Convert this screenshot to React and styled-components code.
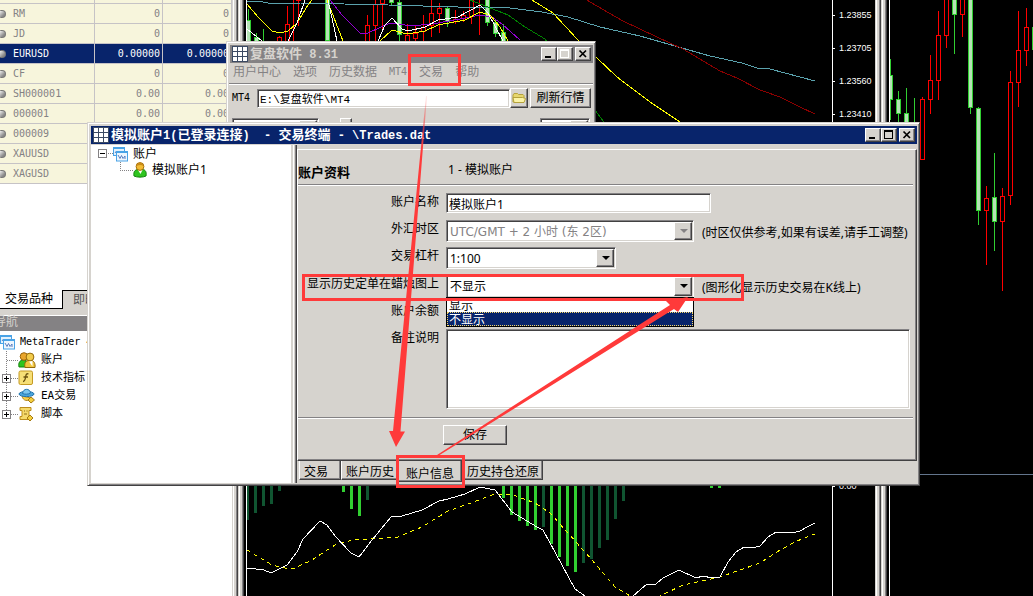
import React from "react";
import styled, { createGlobalStyle, css } from "styled-components";

const face = "#d6d3ce";
const shade = "#848284";
const dark = "#424142";
const navy = "#08246b";
const markRed = "#ff3a3a";

const GlobalStyle = createGlobalStyle`
  * { box-sizing: border-box; }
  body {
    margin: 0;
    background: #fff;
    color: #000;
    font: 12px/16px "Noto Sans", "Noto Sans CJK SC", sans-serif;
  }
  button, input, select, textarea { font: inherit; color: inherit; margin: 0; border-radius: 0; }
`;

const raised = css`
  background: ${face};
  border: 1px solid;
  border-color: #fff ${dark} ${dark} #fff;
  box-shadow: inset -1px -1px ${shade};
`;
const sunken = css`
  background: #fff;
  border: 1px solid;
  border-color: ${shade} #fff #fff ${shade};
  box-shadow: inset 1px 1px ${dark}, inset -1px -1px ${face};
`;

/* ---------- desktop ---------- */
const Desktop = styled.div`
  position: relative;
  display: flex;
  height: 100vh;
  min-height: 596px;
  overflow: hidden;
  background: #fff;
`;
const SideBar = styled.aside`
  flex: 0 0 232px;
  overflow: hidden;
  display: flex;
  flex-direction: column;
`;
const Splitter = styled.div`
  flex: 0 0 15px;
  background: linear-gradient(
    to right,
    ${face} 0 1px, #fff 1px 2px, ${face} 2px 4px, ${shade} 4px 5px, ${dark} 5px 6px,
    ${face} 6px 7px, #fff 7px 8px, ${face} 8px 10px, ${shade} 10px 11px, ${dark} 11px 12px,
    #000 12px 14px, #fff 14px 15px
  );
`;
const ChartPane = styled.section`
  flex: ${(p) => p.$grow} 1 ${(p) => p.$basis};
  min-width: 0;
  overflow: hidden;
  display: flex;
  background: #000;
`;
const Plot = styled.svg`
  flex: 1 1 0;
  min-width: 0;
  height: 596px;
  display: block;
`;
const PriceAxis = styled.div`
  flex: 0 0 43px;
  border-left: 1px solid #fff;
  color: #fff;
  font: 9px/10px "Liberation Sans", sans-serif;
  padding-top: 10px;
  display: flex;
  flex-direction: column;
  gap: 23px;
`;
const Tick = styled.span`
  display: flex;
  align-items: center;
  gap: 4px;
  &::before { content: ""; width: 2px; height: 1px; background: #fff; }
`;
const ZeroTick = styled(Tick)`margin-top: 339px;`;

/* ---------- market watch ---------- */
const QuoteTable = styled.table`
  flex: none;
  width: 100%;
  margin-top: -16px;
  table-layout: fixed;
  border-collapse: separate;
  border-spacing: 0;
  color: ${shade};
  font: 10px/18px "DejaVu Sans Mono", monospace;
`;
const QuoteRow = styled.tr`
  background: ${(p) => (p.$selected ? navy : "#f7f5dc")};
  color: ${(p) => (p.$selected ? "#fff" : "inherit")};
`;
const QuoteCell = styled.td`
  height: 20px;
  padding: 0 2px 0 0;
  text-align: right;
  border-right: 1px solid #c6c3c6;
  border-bottom: 1px solid #c6c3c6;
`;
const SymbolHead = styled.th`
  height: 20px;
  padding: 0;
  text-align: left;
  font-weight: normal;
  border-right: 1px solid #c6c3c6;
  border-bottom: 1px solid #c6c3c6;
`;
const SymbolInner = styled.span`
  display: flex;
  align-items: center;
  gap: 7px;
`;
const Dot = styled.i`
  width: 6px;
  height: 8px;
  border-radius: 1px 4px 4px 1px;
  background: linear-gradient(135deg, #eee, #8a8a8a 70%);
  border: 1px solid #777;
  border-left: 0;
`;
const SideTabs = styled.div`
  flex: none;
  display: flex;
  margin-top: 106px;
  height: 19px;
`;
const SideTab = styled.button`
  flex: ${(p) => (p.$active ? "0 0 63px" : "1 1 0")};
  height: 19px;
  padding: 0 0 0 ${(p) => (p.$active ? 5 : 10)}px;
  text-align: left;
  line-height: 16px;
  color: ${(p) => (p.$active ? "#000" : "#555")};
  background: ${(p) => (p.$active ? "#fff" : face)};
  border: 0 solid #000;
  border-width: ${(p) => (p.$active ? "0 1px 1px 0" : "1px 0 0 0")};
`;
const NavHeader = styled.h2`
  flex: none;
  margin: 0;
  height: 22px;
  border-top: 6px solid ${face};
  border-bottom: 2px solid ${shade};
  box-shadow: inset 0 1px #fff;
  background: ${shade};
  color: ${face};
  font-size: 12px;
  font-weight: normal;
  line-height: 14px;
  text-indent: -6px;
`;
const NavTree = styled.ul`
  list-style: none;
  margin: 0;
  padding: 2px 0 0;
  font: 11px/18px "DejaVu Sans Mono", "Noto Sans CJK SC", monospace;
`;
const NavItem = styled.li`
  display: flex;
  align-items: center;
  gap: 5px;
  height: 18px;
  white-space: nowrap;
  font-size: ${(p) => (p.$root ? 10 : 11)}px;
`;
const IconBox = styled.span`
  width: 18px;
  height: 17px;
  margin-left: -5px;
  display: flex;
`;

/* ---------- windows ---------- */
const Window = styled.section`
  position: absolute;
  left: ${(p) => p.$x}px;
  top: ${(p) => p.$y}px;
  width: ${(p) => p.$w}px;
  padding: 2px;
  display: flex;
  flex-direction: column;
  background: ${face};
  border: 1px solid;
  border-color: ${face} ${dark} ${dark} ${face};
  box-shadow: inset 1px 1px #fff, inset -1px -1px ${shade};
`;
const TitleBar = styled.header`
  display: flex;
  align-items: center;
  height: 18px;
  margin: 1px 0 0 1px;
  padding: 0 2px;
  background: ${(p) => (p.$active ? navy : shade)};
  color: ${(p) => (p.$active ? "#fff" : face)};
`;
const TitleText = styled.h1`
  flex: 1;
  margin: 0 0 0 2px;
  font: bold 13px/18px "Noto Sans CJK SC", sans-serif;
  white-space: pre;
`;
const Mono = styled.span`
  font: bold 12px/18px "Liberation Mono", monospace;
`;
const CaptionButton = styled.button`
  ${raised}
  width: 16px;
  height: 14px;
  padding: 0;
  display: block;
  margin-left: ${(p) => p.$gap || 0}px;
`;
const MenuBar = styled.nav`
  display: flex;
  align-items: flex-start;
  gap: 12px;
  height: 21px;
  padding: 1px 4px 0;
  border-bottom: 1px solid ${shade};
`;
const MenuItem = styled.button`
  padding: 0;
  border: 0;
  background: none;
  color: ${shade};
  line-height: 16px;
  font-family: ${(p) => (p.$mono ? '"DejaVu Sans Mono", monospace' : "inherit")};
  font-size: ${(p) => (p.$mono ? 10 : 12)}px;
`;
const PathRow = styled.div`
  display: flex;
  align-items: center;
  padding: 3px 2px 0 3px;
  border-top: 1px solid #fff;
`;
const PathLabel = styled.label`
  width: 25px;
  font: 10px/18px "DejaVu Sans Mono", monospace;
`;
const PathInput = styled.input`
  ${sunken}
  flex: 1;
  min-width: 0;
  height: 19px;
  padding: 0 2px;
  font: 11px/15px "Liberation Mono", "Noto Sans CJK SC", monospace;
`;
const PushButton = styled.button`
  ${raised}
  width: ${(p) => p.$w}px;
  height: 20px;
  padding: 0;
  line-height: 16px;
  margin-left: ${(p) => p.$gap || 0}px;
  display: flex;
  align-items: center;
  justify-content: center;
`;
const OptionRow = styled.div`
  display: flex;
  align-items: flex-start;
  justify-content: space-between;
  padding: 10px 3px 0;
`;
const OptionGroup = styled.div`
  display: flex;
  gap: 21px;
`;
const CheckBox = styled.input`
  ${raised}
  appearance: none;
  width: 12px;
  height: 12px;
`;

const WindowBody = styled.div`
  display: flex;
  align-items: stretch;
  margin: 1px 0 0 1px;
`;
const AccountTree = styled.ul`
  flex: 0 0 200px;
  list-style: none;
  margin: 0;
  padding: 1px 0 0 7px;
  height: 338px;
  background: #fff;
`;
const AccountItem = styled.li`
  display: flex;
  align-items: center;
  height: 16px;
  line-height: 16px;
  padding-left: ${(p) => (p.$child ? 22 : 0)}px;
  gap: 5px;
`;
const Lead = styled.span`
  display: flex;
  align-items: center;
`;
const PaneSplitter = styled.div`
  flex: 0 0 6px;
  background: linear-gradient(to right, ${face} 0 2px, #fff 2px 3px, ${face} 3px 4px, ${shade} 4px 5px, ${dark} 5px 6px);
`;
const MainPane = styled.div`
  flex: 1;
  min-width: 0;
  padding-top: 4px;
`;
const Sheet = styled.form`
  border: 1px solid;
  border-color: #fff ${dark} ${dark} #fff;
  box-shadow: inset -1px -1px ${shade};
  padding: 0 3px 15px 0;
`;
const SheetHead = styled.div`
  display: grid;
  grid-template-columns: 142px 1fr;
  column-gap: 8px;
  height: 36px;
  border-bottom: 1px solid #fff;
  box-shadow: inset 0 -1px ${shade};
`;
const SheetTitle = styled.h2`
  margin: 14px 0 0;
  font: bold 13px/16px "Noto Sans CJK SC", sans-serif;
`;
const AccountId = styled.p`
  margin: 12px 0 0;
`;
const Fields = styled.div`padding-top: 7px;`;
const FormRow = styled.div`
  display: grid;
  grid-template-columns: 141px 1fr;
  column-gap: 7px;
  height: ${(p) => p.$h || 27}px;
  align-items: start;
`;
const Label = styled.label`
  padding-top: 1px;
  text-align: right;
  white-space: nowrap;
`;
const Cell = styled.div`
  display: flex;
  align-items: flex-start;
  min-width: 0;
`;
const TextInput = styled.input`
  ${sunken}
  width: 265px;
  height: 20px;
  padding: 1px 2px 0;
`;
const Combo = styled.div`
  position: relative;
  width: ${(p) => p.$w}px;
  flex: none;
  &::after {
    content: "";
    position: absolute;
    right: 6px;
    top: 9px;
    border: 4px solid transparent;
    border-top-color: ${(p) => (p.$off ? shade : "#000")};
    border-bottom: 0;
    pointer-events: none;
  }
  &::before {
    content: "";
    position: absolute;
    right: 2px;
    top: 2px;
    bottom: 2px;
    width: 16px;
    pointer-events: none;
    ${raised}
  }
`;
const Select = styled.select`
  ${sunken}
  appearance: none;
  display: block;
  width: 100%;
  height: ${(p) => p.$h || 22}px;
  padding: 1px 18px 0 3px;
  font-family: ${(p) => (p.$wide ? '"DejaVu Sans"' : '"Noto Sans"')}, "Noto Sans CJK SC", sans-serif;
  &:disabled { color: ${shade}; opacity: 1; }
`;
const Options = styled.ul`
  position: absolute;
  z-index: 1;
  left: 0;
  right: 0;
  top: 22px;
  list-style: none;
  margin: 0;
  padding: 0;
  background: #fff;
  border: 1px solid #000;
`;
const Option = styled.li`
  height: 14px;
  line-height: 16px;
  padding-left: 2px;
  overflow: hidden;
  ${(p) => p.$on && css`
    background: ${navy};
    color: #fff;
    outline: 1px dotted #f7d76b;
    outline-offset: -1px;
  `}
`;
const Hint = styled.span`
  margin: 5px 0 0 8px;
  white-space: nowrap;
`;
const Notes = styled.textarea`
  ${sunken}
  display: block;
  width: 100%;
  max-width: 464px;
  height: 80px;
  resize: none;
`;
const Rule = styled.hr`
  margin: 8px 0 6px;
  height: 2px;
  border: 0;
  background: linear-gradient(${shade} 50%, #fff 50%);
`;
const Actions = styled.div`padding-left: 145px;`;
const TabStrip = styled.div`
  display: flex;
  align-items: flex-start;
  padding-left: 2px;
  height: 22px;
`;
const Tab = styled.button`
  height: ${(p) => (p.$active ? 21 : 19)}px;
  padding: ${(p) => (p.$active ? "4px 7px 0 7px" : "2px 3px 0 4px")};
  min-width: 42px;
  line-height: 15px;
  text-align: left;
  white-space: nowrap;
  background: ${face};
  border: 1px solid;
  border-color: transparent ${dark} ${dark} #fff;
  border-top: 0;
  box-shadow: inset -1px -1px ${shade};
`;
const Marks = styled.svg`
  position: absolute;
  z-index: 2;
  left: 0;
  top: 0;
  width: 100%;
  height: 100%;
  pointer-events: none;
`;

/* ---------- icons ---------- */
const GridIcon = () => (
  <svg width="16" height="16" viewBox="0 0 16 16" shapeRendering="crispEdges" aria-hidden="true">
    <rect width="16" height="16" fill="#3b4a63" />
    {[1, 6, 11].map((y) => [1, 6, 11].map((x) => (
      <rect key={x + "-" + y} x={x} y={y} width="4" height="4" fill="#fff" />
    )))}
  </svg>
);
const TerminalIcon = () => (
  <svg width="15" height="15" viewBox="0 0 15 15" aria-hidden="true">
    <rect x="0.5" y="0.5" width="11" height="8" fill="#e4f2fd" stroke="#4aa3e6" />
    <rect x="0" y="0" width="12" height="2" fill="#4aa3e6" />
    <path d="M2 6l1.500-2L5 6" fill="none" stroke="#5b7fc0" />
    <rect x="3.500" y="4.500" width="11" height="9.500" fill="#eef6fe" stroke="#4aa3e6" />
    <rect x="3" y="4" width="12" height="2" fill="#4aa3e6" />
    <path d="M5 8l2 3.500L8.500 8.500l1.500 3L12 9v3" fill="none" stroke="#5b7fc0" />
  </svg>
);
const UserIcon = () => (
  <svg width="14" height="16" viewBox="0 0 14 16" aria-hidden="true">
    <path d="M1 14c-.8-4 1-6.500 4-6.500h4.500c3 0 4.300 3 3.500 6.500-3 1.500-9 1.500-12 0z" fill="#2fc41f" stroke="#13820d" />
    <path d="M5 8l2.500 4L9.500 8z" fill="#fff" />
    <circle cx="7" cy="4.500" r="3.900" fill="#f3bd35" stroke="#a56c0b" />
    <path d="M3.500 4C4 0 10 0 10.500 4 8 2.500 6 3 3.500 4z" fill="#c98a17" />
  </svg>
);
const UsersIcon = () => (
  <svg width="18" height="17" viewBox="0 0 18 17" aria-hidden="true">
    <path d="M1 15c-1-4 1-7 4-7h3v7z" fill="#2fc41f" stroke="#13820d" />
    <circle cx="6" cy="4.500" r="3.800" fill="#e9a52c" stroke="#9a650b" />
    <path d="M7 15.500c-1-5 1-7 4-7h2c3 0 4.500 3 4 7z" fill="#f0c640" stroke="#94690a" />
    <circle cx="12" cy="5" r="3.900" fill="#f2cb4b" stroke="#94690a" />
    <path d="M11 9.500l3.500 5V9z" fill="#fff" />
  </svg>
);
const FunctionIcon = () => (
  <svg width="16" height="16" viewBox="0 0 16 16" aria-hidden="true">
    <rect x="1" y="1" width="13.500" height="13.500" rx="1.500" fill="#f6df77" stroke="#c59a23" />
    <path d="M10.500 4c-2-.8-2.500.5-2.800 2.500S7 11.500 5 11.500M5.500 7h4.500" fill="none" stroke="#6b5210" strokeWidth="1.300" />
  </svg>
);
const ExpertIcon = () => (
  <svg width="18" height="16" viewBox="0 0 18 16" aria-hidden="true">
    <path d="M4 8c1 5 6 6 9 2z" fill="#f6cf4c" stroke="#b5861a" />
    <ellipse cx="8.500" cy="6" rx="7.500" ry="2.600" fill="#4aa5dc" stroke="#2374ad" />
    <path d="M4.500 5.500C5 0 12 0 12.500 5 10 6.500 7 6.500 4.500 5.500z" fill="#7cc6ef" stroke="#2374ad" />
    <path d="M13 9l3.500 3-3.500 3-3-3z" fill="#f4cf3e" stroke="#a67a12" />
  </svg>
);
const ScriptIcon = () => (
  <svg width="17" height="16" viewBox="0 0 17 16" aria-hidden="true">
    <path d="M2 1.500h11v3h-2v6h2v3H2v-3h2v-6H2z" fill="#f6da6b" stroke="#bb8d1d" />
    <path d="M6 5h1M8.500 5h1M6 8h3" stroke="#8d6a16" />
    <path d="M12 9l3 3-3 3-3-3z" fill="#f4cf3e" stroke="#a67a12" />
  </svg>
);
const FolderIcon = () => (
  <svg width="14" height="12" viewBox="0 0 14 12" aria-hidden="true">
    <path d="M1 10V3l1-1.500h3.500l1 1H11l1 1V10z" fill="#e6d66c" stroke="#b5a23c" />
    <path d="M2 10.500L1 5.500h9.500l3 1-1.500 4z" fill="#fbf3a6" stroke="#b5a23c" />
  </svg>
);
const Branch = ({ kind }) => (
  <svg width="18" height="18" viewBox="0 0 18 18" shapeRendering="crispEdges" aria-hidden="true">
    <path d={kind === "end" ? "M6.500 0v5" : "M6.500 0v18"} stroke={shade} strokeDasharray="1 1" />
    <path d="M7 9.500h11" stroke={shade} strokeDasharray="1 1" />
    {kind !== "leaf" && (
      <g>
        <rect x="2.500" y="5.500" width="8" height="8" fill="#fff" stroke={shade} />
        <path d="M4 9.500h5M6.500 7v5" stroke="#000" />
      </g>
    )}
  </svg>
);
const CollapseBox = () => (
  <svg width="15" height="16" viewBox="0 0 15 16" shapeRendering="crispEdges" aria-hidden="true">
    <rect x="0.500" y="3.500" width="8" height="8" fill="#fff" stroke={shade} />
    <path d="M2 7.500h5" stroke="#000" />
    <path d="M10 7.500h5" stroke={shade} strokeDasharray="1 1" />
  </svg>
);
const ChildBranch = () => (
  <svg width="13" height="16" viewBox="0 0 13 16" shapeRendering="crispEdges" aria-hidden="true">
    <path d="M0.500 0v8.500h12" fill="none" stroke={shade} strokeDasharray="1 1" />
  </svg>
);
const CaptionGlyph = ({ kind, color }) => (
  <svg width="14" height="12" viewBox="0 0 14 12" shapeRendering={kind === "close" ? "auto" : "crispEdges"} aria-hidden="true" display="block">
    {kind === "min" && <rect x="3" y="8" width="6" height="2" fill={color} />}
    {kind === "max" && <path d="M2.500 2v7.500h8V2M2 1.500h9M2 2.500h9" fill="none" stroke={color} />}
    {kind === "close" && <path d="M3.500 2.500l6.500 6.500M10 2.500L3.500 9" stroke={color} strokeWidth="1.700" />}
  </svg>
);
const CaptionButtons = ({ maxColor = "#000" }) => (
  <>
    <CaptionButton aria-label="最小化"><CaptionGlyph kind="min" color="#000" /></CaptionButton>
    <CaptionButton aria-label="最大化"><CaptionGlyph kind="max" color={maxColor} /></CaptionButton>
    <CaptionButton aria-label="关闭" $gap={2}><CaptionGlyph kind="close" color="#000" /></CaptionButton>
  </>
);

/* ---------- chart data: [centre x, high, low, body top, body bottom, rising] ---------- */
const mainCandles = [
  [248, 9, 40, 20, 41, 0], [256, 33, 41, 37, 41, 0], [263, 29, 41, 41, 41, 0], [279, 36, 41, 37, 41, 1],
  [287, 6, 41, 24, 41, 1], [293, 0, 41, 0, 0, 1], [298, 0, 26, -2, 0, 1], [327, 0, 41, -2, 40, 0],
  [367, 15, 41, 25, 41, 1], [375, 0, 41, 4, 25, 1], [382, 0, 30, -2, 3, 1], [391, 0, 6, -2, 2, 0],
  [399, 0, 41, 2, 34, 0], [407, 24, 41, 35, 41, 1], [415, 25, 41, 33, 38, 1], [423, 15, 41, 27, 31, 1],
  [431, 0, 37, 13, 25, 1], [439, 3, 33, 8, 13, 1], [447, 7, 27, 8, 21, 0], [455, 10, 24, 19, 21, 1],
  [463, 11, 22, 15, 18, 1], [471, 0, 24, -2, 16, 1], [479, 0, 35, 0, 0, 1], [487, 0, 26, -2, 22, 0],
  [495, 20, 37, 22, 33, 0], [503, 24, 41, 32, 41, 0],
];
const sideCandles = [
  [890, 59, 120, 75, 99, 0], [898, 91, 123, 99, 113, 0], [906, 88, 123, 113, 123, 0], [914, 98, 123, 123, 123, 0],
  [922, 97, 160, 99, 159, 1], [930, 55, 114, 80, 99, 1], [938, 11, 100, 35, 80, 1], [946, 0, 48, -2, 35, 1],
  [954, 0, 54, -2, 14, 0], [962, 0, 37, -2, 14, 1], [970, 0, 114, -2, 107, 0], [978, 107, 225, 108, 210, 0],
  [986, 186, 265, 198, 210, 1], [994, 153, 251, 197, 221, 0], [1002, 188, 291, 196, 221, 1],
  [1010, 71, 205, 82, 195, 1], [1018, 11, 107, 50, 82, 1], [1026, 8, 66, 27, 50, 1], [1034, 27, 50, 27, 49, 0],
];
const bars = [
  [247, 520, 0], [255, 513, 0], [263, 506, 0], [271, 504, 0], [279, 491, 0],
  [343, 492, 1], [351, 509, 1], [359, 516, 1], [367, 500, 0],
  [503, 498, 1], [511, 515, 1], [519, 521, 1], [527, 526, 1], [535, 530, 1], [543, 527, 0],
  [551, 544, 1], [559, 557, 1], [567, 566, 1], [575, 572, 1], [583, 563, 0], [591, 559, 0],
  [599, 548, 0], [607, 540, 0], [615, 519, 0], [623, 501, 0], [711, 488, 1], [719, 488, 1],
];
const averages = [
  ["#5aa2ad", "247,1 258,1 268,3 300,3 388,5 458,7 502,7 542,12 568,17 600,27 640,36 710,56 742,63 757,68 770,69 815,81"],
  ["#8b0000", "587,0 590,2 623,21 657,37 683,49 720,71 737,78 760,90 780,97 800,107 815,114"],
  ["#008200", "470,0 508,15 525,27 545,39 597,113 604,122"],
  ["#9400d3", "330,0 342,15 360,33 368,33 390,23 412,26 438,23 465,18 480,15 492,17 502,24 520,40"],
  ["#ff0", "247,4 258,17 272,31 280,33 288,31 297,23 308,5 312,0"],
  ["#ff0", "327,0 343,41"],
  ["#ff0", "380,41 392,30 407,34 425,31 438,25 465,20 480,12 490,15 500,27 508,41"],
  ["#ff0", "532,0 553,13 578,40 597,58 617,77 653,104 680,122"],
  ["#fff", "247,29 262,41"],
  ["#fff", "288,41 297,23 305,0"],
  ["#fff", "328,0 337,41"],
  ["#fff", "378,41 385,25 392,18 402,29 408,31 425,27 438,20 458,17 480,5 488,13 503,41"],
];
const macd = "247,568 264,570 271,573 287,565 297,552 303,539 320,521 327,525 335,536 351,553 359,557 372,540 391,517 402,516 422,510 439,501 448,499 465,494 480,487 495,490 512,512 537,527 543,530 575,589 585,596 633,596 647,584 656,584 663,578 679,570 696,578 703,576 712,578 720,577 728,562 736,552 744,547 752,548 760,546 768,537 776,532 792,533 800,531 807,527 815,523";
const signal = "247,550 272,565 285,568 295,568 312,560 338,543 355,540 398,537 422,527 448,511 468,504 495,494 513,495 535,503 550,513 568,533 592,560 615,587 632,597 660,596 683,585 720,577 760,563 780,550 797,541 815,534";

const Candle = ({ d: [x, hi, lo, top, bottom, up] }) => (
  <g stroke={up ? "#f00" : "#31cf31"} fill={up ? "#000" : "#b5e3b5"}>
    <path d={`M${x + 0.5} ${hi}V${lo}`} />
    {bottom > top && <rect x={x - 1.5} y={top + 0.5} width="4" height={bottom - top} />}
  </g>
);

const quotes = [
  ["", "", ""],
  ["RM", "0", "0"],
  ["JD", "0", "0"],
  ["EURUSD", "0.00000", "0.00000"],
  ["CF", "0", "0"],
  ["SH000001", "0.00", "0.00"],
  ["000001", "0.00", "0.00"],
  ["000009", "", ""],
  ["XAUUSD", "", ""],
  ["XAGUSD", "", ""],
];

const navItems = [
  ["账户", "leaf", UsersIcon],
  ["技术指标", "node", FunctionIcon],
  ["EA交易", "node", ExpertIcon],
  ["脚本", "end", ScriptIcon],
];

export default function App() {
  return (
    <Desktop>
      <GlobalStyle />
      <SideBar>
        <QuoteTable>
          <colgroup><col width="95" /><col width="68" /><col width="69" /></colgroup>
          <tbody>
            {quotes.map(([name, bid, ask], i) => (
              <QuoteRow key={i} $selected={name === "EURUSD"}>
                <SymbolHead scope="row"><SymbolInner>{name && <Dot />}{name}</SymbolInner></SymbolHead>
                <QuoteCell>{bid}</QuoteCell>
                <QuoteCell>{ask}</QuoteCell>
              </QuoteRow>
            ))}
          </tbody>
        </QuoteTable>
        <SideTabs>
          <SideTab $active>交易品种</SideTab>
          <SideTab>即时图</SideTab>
        </SideTabs>
        <NavHeader>导航</NavHeader>
        <NavTree>
          <NavItem $root><TerminalIcon />MetaTrader 4</NavItem>
          {navItems.map(([text, kind, Icon]) => (
            <NavItem key={text}><Branch kind={kind} /><IconBox><Icon /></IconBox>{text}</NavItem>
          ))}
        </NavTree>
      </SideBar>
      <Splitter />
      <ChartPane $grow={1} $basis="628px">
        <Plot shapeRendering="crispEdges" aria-label="主图">
          <g transform="translate(-247 0)">
            {mainCandles.map((d) => <Candle key={d[0]} d={d} />)}
            {averages.map(([color, points], i) => (
              <polyline key={i} points={points} fill="none" stroke={color} />
            ))}
            {bars.map(([x, y, bright]) => (
              <rect key={x} x={x - 1} y="480" width="3" height={y - 480} fill={bright ? "#31cf31" : "#105531"} />
            ))}
            <polyline points={signal} fill="none" stroke="#ff0" strokeDasharray="4 4" />
            <polyline points={macd} fill="none" stroke="#fff" />
          </g>
        </Plot>
        <PriceAxis>
          <Tick>1.23855</Tick>
          <Tick>1.23705</Tick>
          <Tick>1.23560</Tick>
          <Tick>1.23410</Tick>
          <ZeroTick>0.00</ZeroTick>
        </PriceAxis>
      </ChartPane>
      <Splitter />
      <ChartPane $grow={0} $basis="143px">
        <Plot shapeRendering="crispEdges" aria-label="副图">
          <g transform="translate(-890 0)">
            {sideCandles.map((d) => <Candle key={d[0]} d={d} />)}
            <path d="M890 474.500h2000" stroke="#63758c" />
          </g>
        </Plot>
      </ChartPane>

      <Window $x={226} $y={41} $w={370}>
        <TitleBar>
          <GridIcon />
          <TitleText>复盘软件<Mono> 8.31</Mono></TitleText>
          <CaptionButtons maxColor="#fff" />
        </TitleBar>
        <MenuBar>
          <MenuItem>用户中心</MenuItem>
          <MenuItem>选项</MenuItem>
          <MenuItem>历史数据</MenuItem>
          <MenuItem $mono>MT4</MenuItem>
          <MenuItem>交易</MenuItem>
          <MenuItem>帮助</MenuItem>
        </MenuBar>
        <PathRow>
          <PathLabel htmlFor="mt4-path">MT4</PathLabel>
          <PathInput id="mt4-path" defaultValue="E:\复盘软件\MT4" />
          <PushButton $w={18} aria-label="浏览"><FolderIcon /></PushButton>
          <PushButton $w={61} $gap={2}>刷新行情</PushButton>
        </PathRow>
        <OptionRow>
          <OptionGroup>
            <Combo $w={87}><Select aria-label="品种" /></Combo>
            <CheckBox type="checkbox" aria-label="启用" />
          </OptionGroup>
          <Combo $w={50}><Select aria-label="周期" /></Combo>
        </OptionRow>
      </Window>

      <Window $x={87} $y={122} $w={833}>
        <TitleBar $active>
          <GridIcon />
          <TitleText>
            模拟账户<Mono>1(</Mono>已登录连接<Mono>)  - </Mono>交易终端<Mono> - \Trades.dat</Mono>
          </TitleText>
          <CaptionButtons />
        </TitleBar>
        <WindowBody>
          <AccountTree>
            <AccountItem><Lead><CollapseBox /><TerminalIcon /></Lead>账户</AccountItem>
            <AccountItem $child><Lead><ChildBranch /><UserIcon /></Lead>模拟账户1</AccountItem>
          </AccountTree>
          <PaneSplitter />
          <MainPane>
            <Sheet onSubmit={(e) => e.preventDefault()}>
              <SheetHead>
                <SheetTitle>账户资料</SheetTitle>
                <AccountId>1 - 模拟账户</AccountId>
              </SheetHead>
              <Fields>
                <FormRow>
                  <Label htmlFor="name">账户名称</Label>
                  <Cell><TextInput id="name" defaultValue="模拟账户1" /></Cell>
                </FormRow>
                <FormRow>
                  <Label htmlFor="zone">外汇时区</Label>
                  <Cell>
                    <Combo $w={248} $off>
                      <Select id="zone" $wide disabled><option>UTC/GMT + 2 小时 (东 2区)</option></Select>
                    </Combo>
                    <Hint>(时区仅供参考,如果有误差,请手工调整)</Hint>
                  </Cell>
                </FormRow>
                <FormRow $h={28}>
                  <Label htmlFor="leverage">交易杠杆</Label>
                  <Cell><Combo $w={170}><Select id="leverage"><option>1:100</option></Select></Combo></Cell>
                </FormRow>
                <FormRow>
                  <Label htmlFor="show">显示历史定单在蜡烛图上</Label>
                  <Cell>
                    <Combo $w={248}>
                      <Select id="show" $h={23} defaultValue="不显示"><option>显示</option><option>不显示</option></Select>
                      <Options role="listbox" aria-label="显示历史定单在蜡烛图上">
                        <Option role="option" aria-selected="false">显示</Option>
                        <Option role="option" aria-selected="true" $on>不显示</Option>
                      </Options>
                    </Combo>
                    <Hint>(图形化显示历史交易在K线上)</Hint>
                  </Cell>
                </FormRow>
                <FormRow><Label as="span">账户余额</Label></FormRow>
                <FormRow $h={80}>
                  <Label htmlFor="notes">备注说明</Label>
                  <Notes id="notes" />
                </FormRow>
              </Fields>
              <Rule />
              <Actions><PushButton $w={64}>保存</PushButton></Actions>
            </Sheet>
            <TabStrip role="tablist">
              <Tab type="button" role="tab">交易</Tab>
              <Tab type="button" role="tab">账户历史</Tab>
              <Tab type="button" role="tab" aria-selected="true" $active>账户信息</Tab>
              <Tab type="button" role="tab">历史持仓还原</Tab>
            </TabStrip>
          </MainPane>
        </WindowBody>
      </Window>

      <Marks aria-hidden="true">
        <defs>
          <linearGradient id="fade" x1="0" y1="96" x2="0" y2="150" gradientUnits="userSpaceOnUse">
            <stop offset="0" stopColor={markRed} stopOpacity="0.1" />
            <stop offset="1" stopColor={markRed} />
          </linearGradient>
        </defs>
        <g fill="none" stroke={markRed} strokeWidth="3">
          <rect x="409.500" y="55.500" width="50" height="29" />
          <rect x="303.500" y="275.500" width="439" height="24" />
          <rect x="397.500" y="456.500" width="66" height="30" />
        </g>
        <path d="M426 96h1L400.500 431.500h4.500L396 447l-7-16h4z" fill="url(#fade)" />
        <path d="M437 455L670 305l-4-4 22-4-10 15-4-3L438 456z" fill={markRed} />
      </Marks>
    </Desktop>
  );
}
